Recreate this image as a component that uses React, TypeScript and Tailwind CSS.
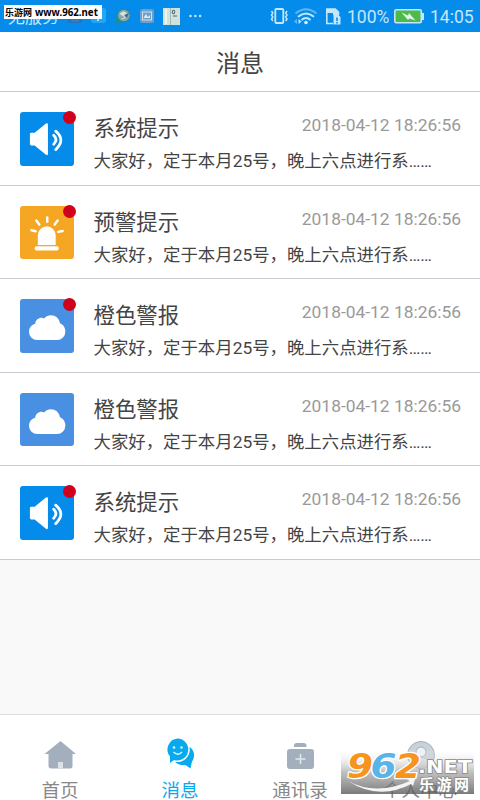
import React from "react";

type Kind = "sound" | "alarm" | "cloud";

const messages: { kind: Kind; title: string; unread: boolean }[] = [
  { kind: "sound", title: "系统提示", unread: true },
  { kind: "alarm", title: "预警提示", unread: true },
  { kind: "cloud", title: "橙色警报", unread: true },
  { kind: "cloud", title: "橙色警报", unread: false },
  { kind: "sound", title: "系统提示", unread: true },
];

const tileColor: Record<Kind, string> = {
  sound: "bg-[#058ceb]",
  alarm: "bg-[#f5a623]",
  cloud: "bg-[#4a90e2]",
};

function Glyph({ kind }: { kind: Kind }) {
  if (kind === "sound")
    return (
      <svg viewBox="0 0 54 54" className="h-full w-full" fill="#fff">
        <path d="M11.5 21h3.3L26.2 11.7q2-1.2 2 1V42q0 2.500-2 1.200L14.800 33.800h-3.300q-1.500 0-1.500-1.500v-9.800q0-1.500 1.500-1.500z" />
        <path d="M34 23.500Q38.500 28 34 32.500M36 19.300Q46.500 28 36 38" fill="none" stroke="#fff" strokeWidth="2.800" strokeLinecap="round" />
      </svg>
    );
  if (kind === "alarm")
    return (
      <svg viewBox="0 0 54 54" className="h-full w-full" fill="#fff">
        <path d="M18 39.300V29.500a9 9 0 0 1 18 0v9.800z" />
        <rect x="14.800" y="40.700" width="24.300" height="4.200" rx="1.800" />
        <path d="M27.500 11.500v4.300M16.500 14.700l3 4M38 14.700l-3 4M11.500 24.500l4.200 1M43 25.300l-4.500.8" stroke="#fff" strokeWidth="2.500" strokeLinecap="round" />
      </svg>
    );
  return (
    <svg viewBox="0 0 54 54" className="h-full w-full" fill="#fff">
      <path d="M17.500 41.500a8.300 8.300 0 0 1-8.400-8.300c0-4.300 3-7.300 6.200-8.100.4-5 5.500-7.200 9-5.500 5-5.800 15-3.500 16 5 3.200 1 5.500 4.300 5.500 8.300a8.500 8.500 0 0 1-8.300 8.600z" />
    </svg>
  );
}

function StatusBar() {
  return (
    <header className="relative flex h-8 shrink-0 items-center bg-[#058ceb] text-[#c5e6fb]">
      <div className="flex w-[67px] shrink-0 pt-px pl-2 text-[17px] leading-8">无服务</div>
      <svg className="h-8 w-[145px] shrink-0" viewBox="67 0 145 32">
        <rect x="68" y="9" width="14" height="14" rx="3" fill="#2870bc" />
        <path d="M71 17l4-4 4 4v5h-8z" fill="#3b79c0" />
        <rect x="91" y="8" width="15" height="15" rx="3" fill="#22a6f5" />
        <path d="M98 12v9" stroke="#d9f0ff" strokeWidth="1.500" />
        <path d="M116 23l1-8a6.500 6.500 0 1 1 5 7z" fill="#279077" />
        <circle cx="123.800" cy="15.500" r="5.800" fill="#88a6ad" />
        <path d="M119.500 14q4-5 8 0l-3 3zM121 19q4 1 7-3" fill="#d8e4e3" />
        <path d="M124 15l5-2-2 5z" fill="#416f7d" />
        <rect x="140" y="9" width="14" height="14" rx="2.500" fill="#6d9fc9" />
        <rect x="142.500" y="12" width="9" height="8" fill="none" stroke="#cee1f0" />
        <path d="M144 17l2-3 2 3 2-2v3h-6z" fill="#dbe8ef" />
        <rect x="163" y="8" width="17" height="17" fill="#d3e2d9" />
        <path d="M166 9v15" stroke="#eef3e8" strokeWidth="2" />
        <path d="M170.500 8v17" stroke="#9dbcc0" />
        <path d="M173 10l2 1-1 3-2-1zM173 16h4" stroke="#456b78" fill="none" />
        <circle cx="190.500" cy="16" r="1.300" fill="#bee4ff" />
        <circle cx="195.300" cy="16" r="1.300" fill="#bee4ff" />
        <circle cx="200.100" cy="16" r="1.300" fill="#bee4ff" />
      </svg>
      <svg className="ml-auto h-8 w-[74px] shrink-0" viewBox="269 0 74 32" fill="none" stroke="#c5e6fb">
        <rect x="275.300" y="9" width="8" height="14" rx="1" strokeWidth="1.800" />
        <path d="M271.500 11l1.300 2-1.300 2 1.300 2-1.300 2 1.300 2M287 11l-1.300 2 1.300 2-1.300 2 1.300 2-1.300 2" strokeWidth="1.500" />
        <path d="M295.500 13.500q10.500-8.500 21 0" stroke="#5fb8f4" strokeWidth="2" />
        <path d="M298 16.800q8-6.500 16 0M301.500 20q4.500-4 9 0" strokeWidth="2" />
        <circle cx="306" cy="22.500" r="1.800" fill="#d9f0ff" stroke="none" />
        <path d="M298.500 19v5l3-2.500z" fill="#c5e6fb" stroke="none" />
        <path d="M297 19v5l-3-2.500z" fill="#5fb8f4" stroke="none" />
        <path d="M333 23.500h-6.200V9h8.500l3.200 3v3" strokeWidth="1.600" />
        <path d="M327 9h8l3 3v3h-5v-2h-6z" fill="#c5e6fb" stroke="none" />
        <path d="M334 15h4.500l2 2v7.500h-7V15z" fill="#c5e6fb" stroke="none" />
        <path d="M337 17.500v3.500M337 22v1.500" stroke="#058ceb" strokeWidth="1.600" />
      </svg>
      <span className="ml-1 w-[42px] shrink-0 pt-[3px] text-[17.500px] leading-none whitespace-nowrap">100%</span>
      <svg className="ml-[5px] h-8 w-[31px] shrink-0" viewBox="394 0 31 32">
        <rect x="394.800" y="9.800" width="26.500" height="13" rx="1.500" fill="#50b94c" stroke="#c5e6fb" strokeWidth="1.600" />
        <path d="M422 13h2v7h-2z" fill="#c5e6fb" />
        <path d="M401.500 12.500l6.500 3 1-2.500 6.500 7.500-6-2-1.500 1.500z" fill="#e0f5e6" />
      </svg>
      <span className="mr-[6px] ml-[5px] w-[44px] shrink-0 pt-[3px] text-[17.500px] leading-none">14:05</span>
      <div className="absolute top-[5px] left-1 h-[14px] w-[98px] bg-white pl-px font-['DejaVu_Sans','Noto_Sans_CJK_SC',sans-serif] text-[9px] leading-[15px] font-bold whitespace-nowrap text-black">
        <span className="inline-block w-[30px]">乐游网</span>
        <span className="font-['Noto_Sans',sans-serif] text-[9.700px]">www.962.net</span>
      </div>
    </header>
  );
}

function MessageRow({ kind, title, unread }: { kind: Kind; title: string; unread: boolean }) {
  return (
    <li className="flex h-[93.600px] border-b border-[#c6cad1] bg-white pt-5 pr-[19px] pl-5">
      <div className={`relative size-[53.500px] shrink-0 rounded-[3px] ${tileColor[kind]}`}>
        <Glyph kind={kind} />
        {unread && <i className="absolute -top-px -right-[2.500px] size-[13px] rounded-full bg-[#d0021b]" />}
      </div>
      <div className="ml-5 min-w-0 flex-1 pt-px">
        <div className="flex items-start justify-between">
          <h2 className="text-[21.400px] leading-8">{title}</h2>
          <time className="text-[17.400px] leading-6 whitespace-nowrap text-[#999]">2018-04-12 18:26:56</time>
        </div>
        <p className="text-[17.400px] leading-8 whitespace-nowrap">大家好，定于本月25号，晚上六点进行系……</p>
      </div>
    </li>
  );
}

function NavItem({ label, active, children }: { label: string; active?: boolean; children: React.ReactNode }) {
  return (
    <a className={`flex w-[120px] flex-col items-center pt-[22px] ${active ? "text-[#08a9ed]" : "text-[#888]"}`}>
      <svg className="h-9 w-9 shrink-0" viewBox="0 0 36 36" fill="currentColor">{children}</svg>
      <span className="mt-2 text-[18.500px] leading-5 whitespace-nowrap">{label}</span>
    </a>
  );
}

function Watermark() {
  return (
    <div className="absolute top-[750px] left-[341px] h-11 w-[133px]">
      <svg viewBox="0 0 133 44" className="h-full w-full overflow-visible">
        <defs>
          <linearGradient id="shade" x1="0" y1="0" x2="0" y2="1">
            <stop offset="0" stopColor="#fff" stopOpacity=".1" />
            <stop offset=".5" stopColor="#999" stopOpacity=".62" />
            <stop offset="1" stopColor="#555" stopOpacity=".78" />
          </linearGradient>
        </defs>
        <rect width="133" height="44" fill="url(#shade)" />
        <path d="M7 31Q35 46 69 31l-3-1 9-4-3 10-2-2Q38 51 7 31z" fill="#f4f4f4" />
        <g fontFamily="DejaVu Sans, sans-serif" fontStyle="italic" fontWeight="700" fontSize="33" stroke="#fff" strokeWidth="2.500" paintOrder="stroke" strokeLinejoin="round">
          <text x="6" y="28" fill="#f7941e" textLength="26" lengthAdjust="spacingAndGlyphs">9</text>
          <text x="29.500" y="28" fill="#58b4e9" textLength="26" lengthAdjust="spacingAndGlyphs">6</text>
          <text x="54" y="28" fill="#f7941e" textLength="26" lengthAdjust="spacingAndGlyphs">2</text>
        </g>
        <g fill="#fff" stroke="#888" strokeWidth="1.500" paintOrder="stroke">
          <text x="77" y="22.500" fontFamily="DejaVu Sans, sans-serif" fontWeight="700" fontSize="18" textLength="54" lengthAdjust="spacingAndGlyphs">.NET</text>
          <text x="78" y="40" fontFamily="Noto Sans CJK SC, sans-serif" fontWeight="700" fontSize="15" textLength="50">乐游网</text>
        </g>
      </svg>
    </div>
  );
}

export default function App() {
  return (
    <main className="relative flex h-[800px] w-[480px] flex-col overflow-hidden bg-[#f9f9f9] font-['Roboto','Noto_Sans_CJK_SC',sans-serif] text-[#444]">
      <StatusBar />
      <h1 className="h-[60px] shrink-0 border-b border-[#c6cbd0] bg-white pt-0.5 text-center text-[24px] leading-[60px]">消息</h1>
      <ul className="flex-1">
        {messages.map((message, i) => <MessageRow key={i} {...message} />)}
      </ul>
      <nav className="flex h-[86px] shrink-0 border-t border-[#dfdfdf] bg-white">
        <NavItem label="首页">
          <path d="M18.500 4L34 17h-3.500v12q0 2.500-2.500 2.500H9.500Q6.500 31.500 6.500 29V17H2.500z" fill="#a4afbd" />
          <path d="M16 25h5v6.500h-5z" fill="#dce2e8" />
        </NavItem>
        <NavItem label="消息" active>
          <path d="M27 10c5.500 2 6.500 10 3 14.500L28.500 31.500l-5-3.500c-5 .5-8.500-1-11-3.500z" />
          <path d="M15.500 1.500a11 11 0 1 1-3.500 21.500L8 26v-6.500A11 11 0 0 1 15.500 1.500z" stroke="#fff" strokeWidth="3" paintOrder="stroke" />
          <circle cx="12" cy="10.500" r="1.300" fill="#dff6ff" />
          <circle cx="19.500" cy="10.500" r="1.300" fill="#dff6ff" />
          <path d="M11.500 15q4.500 4.500 8.500 0" fill="none" stroke="#dff6ff" strokeWidth="1.400" />
        </NavItem>
        <NavItem label="通讯录">
          <path d="M12 10V8.500q0-2.500 2.500-2.500h7q3 0 3 2.500V10zM8 12h21q3 0 3 3V29q0 3-3 3H8q-3 0-3-3V15q0-3 3-3z" fill="#a4afbd" />
          <path d="M18.500 17v10M13.500 22h10" stroke="#e2e7ec" strokeWidth="1.500" />
        </NavItem>
        <NavItem label="个人中心">
          <circle cx="19" cy="18" r="13.500" fill="#c9d1d9" stroke="#a4afbd" />
          <circle cx="19" cy="15" r="5" fill="#eef1f4" stroke="#a4afbd" />
          <path d="M9 27q10-12 20 0-9 9-20 0z" fill="#e1e6eb" />
        </NavItem>
      </nav>
      <Watermark />
    </main>
  );
}
